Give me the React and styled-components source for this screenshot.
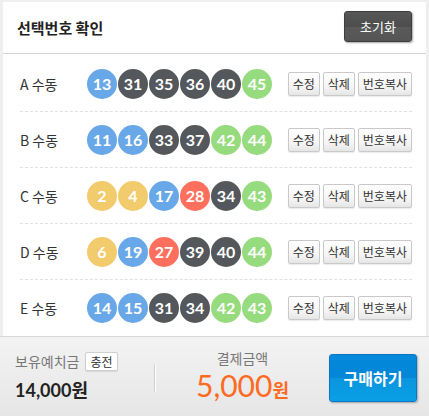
import React from "react";
import styled, { createGlobalStyle } from "styled-components";

const KR = `"Noto Sans CJK KR", "Noto Sans", sans-serif`;
const NUM = `Lato, "Noto Sans CJK KR", sans-serif`;

const rows = [
  { name: "A", nums: [13, 31, 35, 36, 40, 45] },
  { name: "B", nums: [11, 16, 33, 37, 42, 44] },
  { name: "C", nums: [2, 4, 17, 28, 34, 43] },
  { name: "D", nums: [6, 19, 27, 39, 40, 44] },
  { name: "E", nums: [14, 15, 31, 34, 42, 43] }
];

const ballColor = n => {
  if (n <= 10) return "#f2cb6c";
  if (n <= 20) return "#69a8e8";
  if (n <= 30) return "#ff6f5e";
  if (n <= 40) return "#54575c";
  return "#96dc7e";
};

const Global = createGlobalStyle`
  body {
    margin: 0;
    background: #efefef;
    font-family: ${KR};
  }
`;

const Panel = styled.div`
  margin: 2px 3px 0 3px;
  height: 414px;
  background: #fff;
  display: flex;
  flex-direction: column;
`;

const Header = styled.div`
  height: 51px;
  display: flex;
  align-items: center;
  justify-content: space-between;
  padding: 0 14px;
  border-bottom: 1px solid #d4d4d4;
`;

const Title = styled.h1`
  margin: 0;
  font-size: 15px;
  font-weight: 700;
  color: #222;
`;

const ResetButton = styled.button`
  width: 68px;
  height: 31px;
  margin-top: -2px;
  border: 1px solid #3e3e3e;
  border-radius: 3px;
  background: linear-gradient(#575757 0%, #4d4d4d 50%, #5a5a5a 51%, #555 100%);
  box-shadow: 1px 1px 2px rgba(0, 0, 0, 0.35);
  color: #fff;
  font-family: ${KR};
  font-size: 13px;
`;

const List = styled.div`
  padding-top: 2px;
  flex: 1;
`;

const Row = styled.div`
  height: 55px;
  margin: 0 14px 0 17px;
  display: flex;
  align-items: center;
  border-bottom: ${p => (p.$last ? "none" : "1px dashed #e0e0e0")};
`;

const Label = styled.div`
  width: 67px;
  font-size: 14px;
  color: #333;
`;

const Balls = styled.div`
  display: flex;
  gap: 1px;
  flex: 1;
`;

const Ball = styled.span`
  width: 30px;
  height: 30px;
  border-radius: 50%;
  background: ${p => p.$color};
  color: #fff;
  font-family: ${NUM};
  font-weight: 700;
  font-size: 16px;
  display: flex;
  align-items: center;
  justify-content: center;
`;

const Actions = styled.div`
  display: flex;
  gap: 3px;
`;

const SmallButton = styled.button`
  height: 24px;
  padding: 0 4px;
  border: 1px solid #c9c9c9;
  border-radius: 2px;
  background: linear-gradient(#fff 0%, #f6f6f6 60%, #e6e6e6 100%);
  box-shadow: 0 1px 1px rgba(0, 0, 0, 0.08);
  color: #333;
  font-family: ${KR};
  font-size: 12px;
  line-height: 22px;
`;

const Footer = styled.div`
  height: 79px;
  margin: 0 -3px;
  padding: 0 12px 0 15px;
  border-top: 1px solid #d8d8d8;
  background: linear-gradient(#f3f3f3, #e6e6e6);
  display: flex;
  align-items: center;
`;

const Balance = styled.div`
  width: 139px;
  display: flex;
  flex-direction: column;
  gap: 5px;
`;

const BalanceTop = styled.div`
  display: flex;
  align-items: center;
  gap: 6px;
  font-size: 14px;
  color: #777;
`;

const ChargeButton = styled.button`
  height: 19px;
  padding: 0 4px;
  border: 1px solid #cfcfcf;
  border-radius: 2px;
  background: #fff;
  box-shadow: 0 1px 1px rgba(0, 0, 0, 0.1);
  color: #333;
  font-family: ${KR};
  font-size: 12px;
  line-height: 17px;
`;

const BalanceAmount = styled.div`
  font-family: ${NUM};
  font-size: 18px;
  font-weight: 700;
  color: #222;
`;

const Divider = styled.div`
  width: 1px;
  height: 28px;
  margin-top: 3px;
  background: #cfcfcf;
  border-right: 1px solid #fff;
`;

const Payment = styled.div`
  flex: 1;
  display: flex;
  flex-direction: column;
  align-items: center;
`;

const PaymentLabel = styled.div`
  font-size: 14px;
  color: #777;
`;

const PaymentAmount = styled.div`
  font-family: ${NUM};
  font-size: 30px;
  color: #ff6a1f;
  line-height: 34px;
  span {
    font-family: ${KR};
    font-size: 18px;
    font-weight: 700;
  }
`;

const BuyButton = styled.button`
  width: 88px;
  height: 48px;
  margin-top: 2px;
  border: 1px solid #0a76c4;
  border-radius: 3px;
  background: linear-gradient(#0289dc 0%, #0586d6 50%, #0a95de 51%, #0aa0e6 100%);
  box-shadow: 1px 1px 2px rgba(0, 0, 0, 0.3);
  color: #fff;
  font-family: ${KR};
  font-size: 16px;
  font-weight: 700;
`;

export default function App() {
  return (
    <>
      <Global />
      <Panel>
        <Header>
          <Title>선택번호 확인</Title>
          <ResetButton>초기화</ResetButton>
        </Header>
        <List>
          {rows.map((r, i) => (
            <Row key={r.name} $last={i === rows.length - 1}>
              <Label>{r.name} 수동</Label>
              <Balls>
                {r.nums.map(n => (
                  <Ball key={n} $color={ballColor(n)}>
                    {n}
                  </Ball>
                ))}
              </Balls>
              <Actions>
                <SmallButton>수정</SmallButton>
                <SmallButton>삭제</SmallButton>
                <SmallButton>번호복사</SmallButton>
              </Actions>
            </Row>
          ))}
        </List>
        <Footer>
          <Balance>
            <BalanceTop>
              보유예치금 <ChargeButton>충전</ChargeButton>
            </BalanceTop>
            <BalanceAmount>14,000원</BalanceAmount>
          </Balance>
          <Divider />
          <Payment>
            <PaymentLabel>결제금액</PaymentLabel>
            <PaymentAmount>
              5,000<span>원</span>
            </PaymentAmount>
          </Payment>
          <BuyButton>구매하기</BuyButton>
        </Footer>
      </Panel>
    </>
  );
}
